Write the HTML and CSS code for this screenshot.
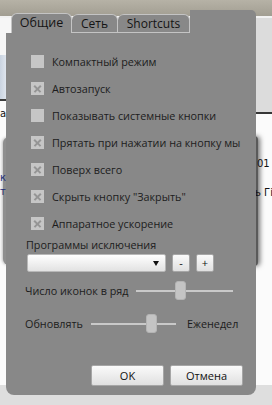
FILE: index.html
```html
<!DOCTYPE html>
<html lang="ru">
<head>
<meta charset="utf-8">
<title>Настройки</title>
<link rel="stylesheet" href="styles.css">
</head>
<body>
<div class="desktop">
  <div class="bg bg-top"></div>
  <div class="bg bg-topline"></div>
  <div class="bg bg-l-white"></div>
  <div class="bg bg-l-image"></div>
  <div class="bg bg-l-line"></div>
  <div class="bg bg-l-win"></div>
  <span class="bg bg-txt t-ac">ас</span>
  <span class="bg bg-txt t-k">к</span>
  <span class="bg bg-txt t-t">т</span>
  <div class="bg bg-r-gray"></div>
  <div class="bg bg-r-line"></div>
  <div class="bg bg-r-shadow"></div>
  <span class="bg bg-txt t-01">01</span>
  <span class="bg bg-txt t-g">ь Гі</span>
  <div class="bg bg-bottom"></div>

  <div class="dialog">
    <div class="tabstrip">
      <div class="tab-gap"></div>
      <div class="tab active">Общие</div>
      <div class="tab">Сеть</div>
      <div class="tab">Shortcuts</div>
      <div class="tab-fill"></div>
    </div>
    <div class="content">
      <div class="checks">
        <div class="row"><span class="cb"></span><span class="lbl">Компактный режим</span></div>
        <div class="row"><span class="cb on"></span><span class="lbl">Автозапуск</span></div>
        <div class="row"><span class="cb"></span><span class="lbl">Показывать системные кнопки</span></div>
        <div class="row"><span class="cb on"></span><span class="lbl">Прятать при нажатии на кнопку мы</span></div>
        <div class="row"><span class="cb on"></span><span class="lbl">Поверх всего</span></div>
        <div class="row"><span class="cb on"></span><span class="lbl">Скрыть кнопку "Закрыть"</span></div>
        <div class="row"><span class="cb on"></span><span class="lbl">Аппаратное ускорение</span></div>
      </div>
      <div class="section-label">Программы исключения</div>
      <div class="combo-row">
        <div class="combo"><span class="arrow"></span></div>
        <button class="sbtn">-</button>
        <button class="sbtn">+</button>
      </div>
      <div class="slider-row r1">
        <span class="slabel">Число иконок в ряд</span>
        <div class="slider s1"><span class="track"></span><span class="thumb" style="left:39px"></span></div>
      </div>
      <div class="slider-row r2">
        <span class="slabel first">Обновлять</span>
        <div class="slider s2"><span class="track"></span><span class="thumb" style="left:55px"></span></div>
        <span class="slabel end">Еженедел</span>
      </div>
      <div class="buttons">
        <button class="btn">OK</button>
        <button class="btn">Отмена</button>
      </div>
    </div>
  </div>
</div>
</body>
</html>
```
FILE: styles.css
```css
html, body {
  margin: 0;
  padding: 0;
}
body {
  width: 272px;
  height: 405px;
  overflow: hidden;
  background: #ffffff;
  font-family: "Open Sans", "Noto Sans", sans-serif;
  color: #1c1c1c;
}
.desktop {
  position: relative;
  width: 272px;
  height: 405px;
  overflow: hidden;
  background: #fbfbfb;
}
.bg { position: absolute; }
.bg-top {
  left: 0; top: 0; width: 272px; height: 16px;
  background: linear-gradient(#b6b2a6, #a29e92);
}
.bg-topline { left: 0; top: 16px; width: 272px; height: 2px; background: #f2f2f2; }
.bg-l-white { left: 0; top: 18px; width: 20px; height: 37px; background: #f6f6f6; }
.bg-l-image {
  left: 0; top: 55px; width: 20px; height: 44px;
  background: linear-gradient(90deg, #c9d3e0, #e6ebf2 40%, #b8c2d0);
}
.bg-l-line { left: 0; top: 99px; width: 20px; height: 2px; background: #3c3c3c; }
.bg-l-win {
  left: 3px; top: 137px; width: 20px; height: 128px;
  background: #8e8e8e;
  border-radius: 6px;
  box-shadow: -1px 0 3px rgba(0,0,0,0.25);
}
.bg-r-gray { left: 240px; top: 18px; width: 32px; height: 94px; background: #dcdcdc; }
.bg-r-line { left: 240px; top: 112px; width: 32px; height: 2px; background: #363636; }
.bg-r-shadow {
  left: 240px; top: 136px; width: 18px; height: 130px;
  background: #5a5a5a;
  border-radius: 4px;
  box-shadow: 2px 0 5px rgba(0,0,0,0.55);
}
.bg-bottom { left: 0; top: 385px; width: 272px; height: 20px; background: #dedede; }
.bg-txt {
  font-family: "DejaVu Sans", sans-serif;
  font-size: 10px;
  line-height: 11px;
  color: #111;
  white-space: nowrap;
}
.t-ac { left: 0; top: 108px; }
.t-k { left: 0; top: 172px; color: #1f2f7a; }
.t-t { left: 0; top: 186px; color: #1f2f7a; }
.t-01 { left: 257px; top: 158px; }
.t-g { left: 255px; top: 187px; }

.dialog {
  position: absolute;
  left: 6px;
  top: 10px;
  width: 250px;
  height: 385px;
  display: flex;
  flex-direction: column;
}
.tabstrip {
  display: flex;
  height: 23px;
  flex: none;
}
.tab-gap { width: 5px; flex: none; }
.tab {
  box-sizing: border-box;
  margin-top: 4px;
  height: 19px;
  border: 1px solid #c4c4c4;
  border-radius: 6px 6px 0 0;
  background: #888888;
  font-size: 12px;
  line-height: 17px;
  text-align: center;
  color: #141414;
}
.tab:nth-child(2) { width: 61px; }
.tab:nth-child(3) { width: 46px; border-left: none; }
.tab:nth-child(4) { width: 72px; border-left: none; }
.tab.active {
  margin-top: 3px;
  height: 20px;
  border-bottom: none;
  font-size: 12.5px;
}
.tab-fill {
  flex: 1;
  background: #888888;
  border-top-right-radius: 5px;
}
.content {
  flex: 1;
  background: #888888;
  border-radius: 0 0 8px 8px;
  padding: 15px 13px 9px 19px;
  display: flex;
  flex-direction: column;
}
.checks {
  display: flex;
  flex-direction: column;
  padding-left: 6px;
}
.row {
  height: 27px;
  display: flex;
  align-items: center;
  gap: 8px;
  font-size: 10.8px;
  white-space: nowrap;
  overflow: hidden;
}
.cb {
  width: 13px;
  height: 13px;
  flex: none;
  background: #c6c6c6;
  position: relative;
}
.cb.on::before, .cb.on::after {
  content: "";
  position: absolute;
  left: 2px;
  top: 6px;
  width: 9px;
  height: 1.6px;
  background: #959595;
  transform: rotate(45deg);
}
.cb.on::after { transform: rotate(-45deg); }
.section-label {
  font-size: 10.8px;
  line-height: 15px;
  padding-left: 1px;
}
.combo-row {
  margin-top: 2px;
  display: flex;
  gap: 6px;
  padding-left: 2px;
}
.combo {
  box-sizing: border-box;
  width: 139px;
  height: 18px;
  border-radius: 2px;
  background: linear-gradient(#ffffff, #e2e2e2);
  border: 1px solid #b8b8b8;
  position: relative;
}
.arrow {
  position: absolute;
  right: 6px;
  top: 6px;
  width: 0;
  height: 0;
  border-left: 3.5px solid transparent;
  border-right: 3.5px solid transparent;
  border-top: 5px solid #111;
}
.sbtn, .btn {
  box-sizing: border-box;
  border: 1px solid #a6a6a6;
  border-radius: 2px;
  background: linear-gradient(#fafafa, #e0e0e0);
  font-family: "Open Sans", "Noto Sans", sans-serif;
  color: #111;
  padding: 0;
}
.sbtn {
  width: 18px;
  height: 18px;
  font-size: 11px;
  line-height: 16px;
}
.slider-row {
  display: flex;
  align-items: center;
  height: 19px;
}
.slider-row.r1 { margin-top: 9px; }
.slider-row.r2 { margin-top: 14px; }
.slabel {
  font-size: 10.8px;
  white-space: nowrap;
}
.slabel.first { width: 66px; flex: none; }
.slider {
  position: relative;
  height: 19px;
  flex: none;
}
.s1 { width: 97px; margin-left: auto; margin-right: 10px; }
.s2 { width: 85px; }
.slabel.end { margin-left: 11px; }
.track {
  position: absolute;
  left: 0;
  right: 0;
  top: 9px;
  height: 2px;
  background: #c9c9c9;
}
.thumb {
  position: absolute;
  top: 0;
  width: 11px;
  height: 19px;
  box-sizing: border-box;
  border-radius: 3px;
  background: #c4c4c4;
  border: 1px solid #b4b4b4;
}
.buttons {
  margin-top: auto;
  display: flex;
  justify-content: flex-end;
  gap: 6px;
}
.btn {
  width: 73px;
  height: 21px;
  font-size: 11px;
  line-height: 19px;
}
```
